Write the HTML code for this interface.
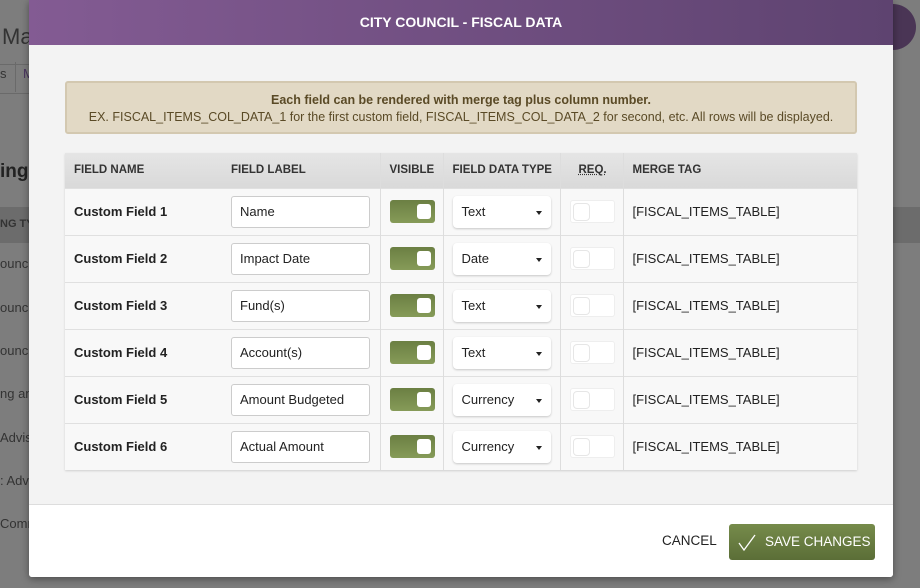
<!DOCTYPE html>
<html><head><style>
*{box-sizing:border-box;margin:0;padding:0}
body{width:920px;height:588px;overflow:hidden;background:#7d7d7d;font-family:"Liberation Sans",sans-serif;position:relative;font-size:13px;color:#222}
.bg{position:absolute;color:#333}
.modal{position:absolute;left:29px;top:0;width:864px;height:577px;background:#f3f3f3;box-shadow:0 2px 8px rgba(0,0,0,.4);border-radius:0 0 3px 3px;overflow:hidden}
.hdr{height:45px;background:linear-gradient(90deg,#835b93,#5e4370);color:#fff;font-weight:bold;font-size:14px;text-align:center;line-height:45px}
.note{position:absolute;left:36px;top:81px;width:792px;height:53px;background:#e2d9c5;border:2px solid #d3c8b0;border-radius:3px;text-align:center;color:#5a4a26;font-size:12.5px;padding-top:9px;line-height:17px}
table{position:absolute;left:36px;top:153px;width:792px;border-collapse:collapse;background:#f8f8f8;box-shadow:0 1px 2px rgba(0,0,0,.15)}
th{height:35px;background:linear-gradient(#e5e5e5,#d9d9d9);font-size:11.5px;text-align:left;padding-left:9px;color:#333}
td{height:47px;border-top:1px solid #e0e0e0;padding-left:9px;font-size:13px}
td.b{font-weight:bold}
.bl{border-left:1px solid #ddd}
.inp{width:139px;height:32px;background:#fff;border:1px solid #ccc;border-radius:3px;padding:0 8px;line-height:30px}
.tg{width:45px;height:23px;border-radius:3px;background:linear-gradient(#6b7f43,#869b58);position:relative}
.tg::after{content:"";position:absolute;right:4px;top:4px;width:14px;height:15px;background:#fff;border-radius:3px}
.sel{width:98px;height:32px;background:#fff;border-radius:4px;box-shadow:0 1px 2px rgba(0,0,0,.2);padding:0 9px;line-height:32px;position:relative}
.sel::after{content:"";position:absolute;right:9px;top:15px;border:3px solid transparent;border-top:4px solid #222}
.rq{width:45px;height:23px;background:#fff;border:1px solid #eee;border-radius:3px;position:relative}
.rq::after{content:"";position:absolute;left:2px;top:2px;width:15px;height:16px;border:1px solid #e6e6e6;border-radius:4px}
.ftr{position:absolute;left:0;top:504px;width:864px;height:73px;background:#fff;border-top:1px solid #ddd}
.cancel{position:absolute;left:633px;top:28px;font-size:13.5px}
.save{position:absolute;left:700px;top:19px;width:146px;height:36px;border-radius:3px;background:linear-gradient(#768b4b,#5b6e37);color:#fff;font-size:13.5px;line-height:36px;padding-left:36px}
</style></head><body>
<div class="bg" style="left:2px;top:24px;font-size:22px">Ma</div>
<div class="bg" style="left:0;top:64px;width:90px;height:30px;border-top:1px solid #6a6a6a;border-bottom:1px solid #6a6a6a"></div>
<div class="bg" style="left:0;top:66px;font-size:13px">s</div>
<div class="bg" style="left:15px;top:62px;width:1px;height:30px;background:#6a6a6a"></div>
<div class="bg" style="left:23px;top:66px;color:#4a3560">M</div>
<div class="bg" style="left:0;top:161px;font-size:19px;font-weight:bold;color:#222">ing</div>
<div class="bg" style="left:0;top:207px;width:29px;height:36px;background:#6c6c6c"></div>
<div class="bg" style="left:0;top:218px;font-size:11px;font-weight:bold">NG TY</div>
<div class="bg" style="left:0;top:256px">ounci</div>
<div class="bg" style="left:0;top:300px">ounci</div>
<div class="bg" style="left:0;top:343px">ounci</div>
<div class="bg" style="left:0;top:386px">ng an</div>
<div class="bg" style="left:0;top:430px">Advis</div>
<div class="bg" style="left:0;top:473px">: Advi</div>
<div class="bg" style="left:0;top:516px">Comm</div>
<div class="bg" style="left:893px;top:207px;width:27px;height:36px;background:#6c6c6c"></div>
<div class="bg" style="left:870px;top:4px;width:46px;height:46px;border-radius:50%;background:#4a3555"></div>
<div class="modal">
<div class="hdr">CITY COUNCIL - FISCAL DATA</div>
<div class="note"><b>Each field can be rendered with merge tag plus column number.</b><br>EX. FISCAL_ITEMS_COL_DATA_1 for the first custom field, FISCAL_ITEMS_COL_DATA_2 for second, etc. All rows will be displayed.</div>
<table>
<tr><th style="width:157px">FIELD NAME</th><th style="width:158px">FIELD LABEL</th><th class="bl" style="width:63px">VISIBLE</th><th class="bl" style="width:117px">FIELD DATA TYPE</th><th class="bl" style="width:63px;padding-left:18px"><u style="text-decoration-style:dotted">REQ.</u></th><th class="bl">MERGE TAG</th></tr>
<tr><td class="b">Custom Field 1</td><td><div class="inp">Name</div></td><td class="bl"><div class="tg"></div></td><td class="bl"><div class="sel">Text</div></td><td class="bl"><div class="rq"></div></td><td class="bl">[FISCAL_ITEMS_TABLE]</td></tr>
<tr><td class="b">Custom Field 2</td><td><div class="inp">Impact Date</div></td><td class="bl"><div class="tg"></div></td><td class="bl"><div class="sel">Date</div></td><td class="bl"><div class="rq"></div></td><td class="bl">[FISCAL_ITEMS_TABLE]</td></tr>
<tr><td class="b">Custom Field 3</td><td><div class="inp">Fund(s)</div></td><td class="bl"><div class="tg"></div></td><td class="bl"><div class="sel">Text</div></td><td class="bl"><div class="rq"></div></td><td class="bl">[FISCAL_ITEMS_TABLE]</td></tr>
<tr><td class="b">Custom Field 4</td><td><div class="inp">Account(s)</div></td><td class="bl"><div class="tg"></div></td><td class="bl"><div class="sel">Text</div></td><td class="bl"><div class="rq"></div></td><td class="bl">[FISCAL_ITEMS_TABLE]</td></tr>
<tr><td class="b">Custom Field 5</td><td><div class="inp">Amount Budgeted</div></td><td class="bl"><div class="tg"></div></td><td class="bl"><div class="sel">Currency</div></td><td class="bl"><div class="rq"></div></td><td class="bl">[FISCAL_ITEMS_TABLE]</td></tr>
<tr><td class="b">Custom Field 6</td><td><div class="inp">Actual Amount</div></td><td class="bl"><div class="tg"></div></td><td class="bl"><div class="sel">Currency</div></td><td class="bl"><div class="rq"></div></td><td class="bl">[FISCAL_ITEMS_TABLE]</td></tr>
</table>
<div class="ftr">
<div class="cancel">CANCEL</div>
<div class="save"><svg style="position:absolute;left:8px;top:8px" width="20" height="20" viewBox="0 0 20 20"><path d="M2 11l5 7L18 3" fill="none" stroke="#fff" stroke-width="1.3"/></svg>SAVE CHANGES</div>
</div>
</div>
</body></html>
